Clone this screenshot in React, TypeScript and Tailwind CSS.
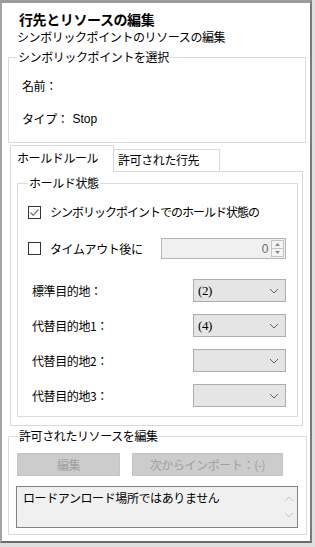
import React from 'react';

const jp = "font-['Noto_Sans_CJK_JP','Noto_Sans',sans-serif]";

// --- petits éléments ---

const Chevron = ({ up = false, color = '#606060' }: { up?: boolean; color?: string }) => (
  <svg width="10" height="6" viewBox="0 0 10 6" className="block">
    <polyline
      points={up ? '1,5 5,1 9,5' : '1,1 5,5 9,1'}
      fill="none"
      stroke={color}
      strokeWidth="1"
    />
  </svg>
);

const CheckBox = ({ checked }: { checked?: boolean }) => (
  <div className="flex h-[13px] w-[13px] shrink-0 items-center justify-center border border-[#333333] bg-white">
    {checked && (
      <svg width="11" height="11" viewBox="0 0 11 11">
        <polyline points="1.5,5.5 4.2,8.2 9.5,2.5" fill="none" stroke="#7b7b7b" strokeWidth="1.3" />
      </svg>
    )}
  </div>
);

const Combo = ({ value }: { value?: string }) => (
  <div className="flex h-[23px] w-[93px] items-center justify-between border border-[#adadad] bg-[#e5e5e5] pl-[4px] pr-[6px]">
    <span className="font-['Liberation_Serif',serif] text-[13px] leading-none text-black">{value}</span>
    <Chevron />
  </div>
);

const DestRow = ({ label, value }: { label: string; value?: string }) => (
  <div className="flex h-[23px] items-center justify-between pl-[14px] pr-[11px]">
    <span className="text-[12px] leading-[16px]">{label}</span>
    <Combo value={value} />
  </div>
);

// --- composant principal ---

export default function App() {
  return (
    <div className={`h-[547px] w-[315px] bg-[#dedede] ${jp} text-black`}>
      <div className="flex h-[543px] w-[312px] flex-col border-b-2 border-l-2 border-r-2 border-t-[3px] border-b-[#6b6b6b] border-l-[#a3a3a3] border-r-[#7a7a7a] border-t-[#9c9c9c] bg-white tracking-[-0.4px]">
        {/* en-tête */}
        <div className="mt-[7px] pl-[15px]">
          <h1 className="pl-[2px] text-[14px] font-bold leading-[19px]">行先とリソースの編集</h1>
          <p className="text-[12px] leading-[16px]">シンボリックポイントのリソースの編集</p>
        </div>

        {/* point symbolique */}
        <fieldset className="mr-[4px] ml-[6px] mt-[4px] border border-[#dcdcdc] px-[13px] pb-[15px]">
          <legend className="ml-[-5px] px-[1px] text-[12px] leading-[16px]">シンボリックポイントを選択</legend>
          <div className="mt-[13px] text-[12px] leading-[16px]">名前：</div>
          <div className="mt-[17px] flex text-[12px] leading-[16px]">
            <span>タイプ：</span>
            <span className="ml-[4px] font-['Liberation_Sans',sans-serif] tracking-normal">Stop</span>
          </div>
        </fieldset>

        {/* onglets */}
        <div className="ml-[8px] mr-[7px] mt-[2px]">
          <div className="flex items-end">
            <div className="relative z-10 mb-[-1px] flex h-[27px] w-[104px] items-start border border-b-0 border-[#d9d9d9] bg-white pl-[6px] pt-[4px] text-[12px] leading-[16px]">
              ホールドルール
            </div>
            <div className="flex h-[22px] w-[106px] items-start border border-b-0 border-l-0 border-[#d9d9d9] bg-white pl-[4px] pt-[2px] text-[12px] leading-[16px]">
              許可された行先
            </div>
          </div>
          <div className="border border-[#d9d9d9] px-[5px] pb-[8px] pt-[3px]">
            <fieldset className="mr-[-1px] ml-[1px] border border-[#dcdcdc] pb-[9px]">
              <legend className="ml-[10px] px-[1px] text-[12px] leading-[16px]">ホールド状態</legend>

              <div className="ml-[10px] mt-[13px] flex h-[16px] items-center gap-[9px]">
                <CheckBox checked />
                <span className="whitespace-nowrap text-[12px] leading-[16px] tracking-[-1px]">シンボリックポイントでのホールド状態の</span>
              </div>

              <div className="ml-[10px] mr-[11px] mt-[18px] flex h-[21px] items-center">
                <CheckBox />
                <span className="ml-[9px] text-[12px] leading-[16px]">タイムアウト後に</span>
                <div className="ml-auto flex h-[21px] w-[125px] items-center justify-end border border-[#b4b4b4] bg-[#f0f0f0] pr-[1px]">
                  <span className="mr-[3px] font-['Liberation_Sans',sans-serif] text-[12px] leading-none text-[#6d6d6d]">0</span>
                  <div className="flex h-[17px] w-[13px] flex-col border border-[#c4c4c4] bg-[#f4f4f4]">
                    <div className="flex flex-1 items-center justify-center border-b border-[#c4c4c4]">
                      <svg width="5" height="3" viewBox="0 0 5 3"><polygon points="0,3 2.5,0 5,3" fill="#8a8a8a" /></svg>
                    </div>
                    <div className="flex flex-1 items-center justify-center">
                      <svg width="5" height="3" viewBox="0 0 5 3"><polygon points="0,0 2.5,3 5,0" fill="#8a8a8a" /></svg>
                    </div>
                  </div>
                </div>
              </div>

              <div className="mt-[20px] flex flex-col gap-[12px]">
                <DestRow label="標準目的地：" value="(2)" />
                <DestRow label="代替目的地1：" value="(4)" />
                <DestRow label="代替目的地2：" />
                <DestRow label="代替目的地3：" />
              </div>
            </fieldset>
          </div>
        </div>

        {/* ressources */}
        <fieldset className="mr-[4px] ml-[6px] mt-[2px] border border-[#dcdcdc] px-[8px] pb-[6px]">
          <legend className="ml-[1px] px-[1px] text-[12px] leading-[16px]">許可されたリソースを編集</legend>
          <div className="mt-[9px] flex gap-[12px]">
            <button className="h-[23px] w-[103px] border border-[#c4c4c4] bg-[#cccccc] text-[12px] text-[#a0a0a0]">
              編集
            </button>
            <button className="h-[23px] w-[151px] border border-[#c4c4c4] bg-[#cccccc] text-[12px] text-[#a0a0a0]">
              次からインポート：(-)
            </button>
          </div>
          <div className="ml-[-1px] mt-[10px] flex h-[42px] w-[282px] border border-[#828282] bg-[#f0f0f0]">
            <div className="flex-1 pl-[6px] pt-[3px] text-[12px] leading-[16px]">ロードアンロード場所ではありません</div>
            <div className="flex w-[17px] flex-col items-center justify-between py-[9px]">
              <Chevron up color="#c2c2c2" />
              <Chevron color="#c2c2c2" />
            </div>
          </div>
        </fieldset>
      </div>
    </div>
  );
}
